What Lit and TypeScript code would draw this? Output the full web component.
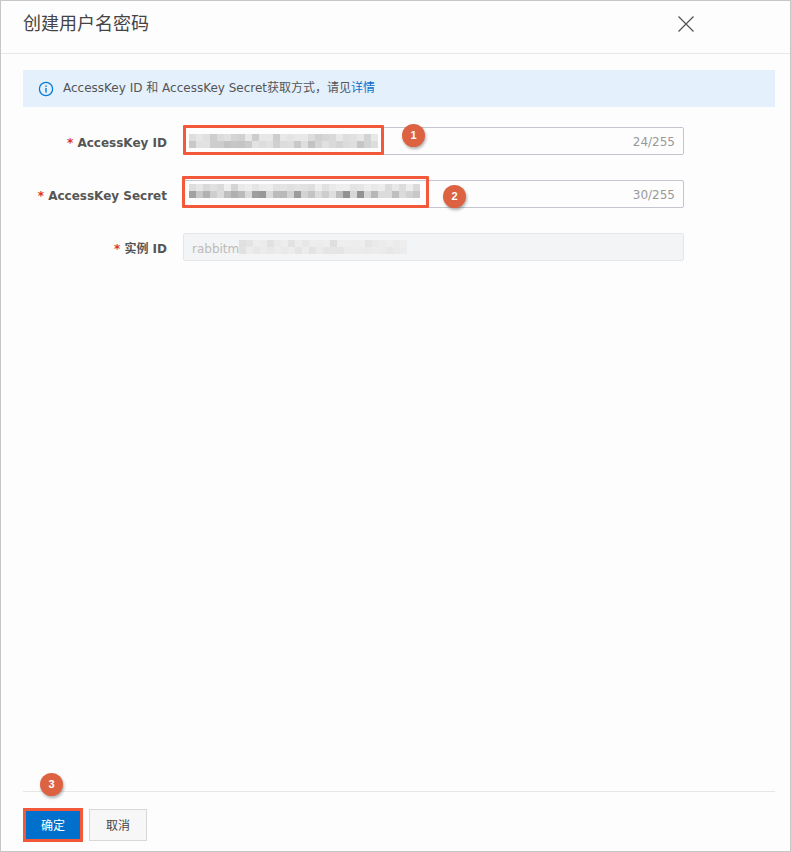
import { LitElement, html, css } from "lit";
import { customElement } from "lit/decorators.js";

function mosaic(cols: number, seed: number, bands: [number, number][], lift = false) {
  let s = seed;
  const next = () => {
    s = (s * 1103515245 + 12345) & 0x7fffffff;
    return s / 0x7fffffff;
  };
  const cells = [];
  for (const [lo, hi] of bands) {
    for (let i = 0; i < cols; i++) {
      const r = next();
      const v = Math.round(hi - (hi - lo) * r * r);
      cells.push(html`<i style="background:rgb(${v},${v},${v})"></i>`);
    }
  }
  return html`<span class="mosaic ${lift ? "lift" : ""}" style="grid-template-columns:repeat(${cols},7px)">${cells}</span>`;
}

@customElement("app-root")
export class AppRoot extends LitElement {
  static styles = css`
    :host {
      display: block;
      width: 791px;
      height: 852px;
      font-family: "DejaVu Sans", "Noto Sans CJK SC", sans-serif;
    }
    .dialog {
      box-sizing: border-box;
      width: 791px;
      height: 852px;
      border: 1px solid #c6c6c6;
      background: #fdfdfd;
      display: flex;
      flex-direction: column;
      position: relative;
    }
    .header {
      flex: none;
      height: 46px;
      border-bottom: 1px solid #e8e8e8;
      display: flex;
      align-items: center;
      justify-content: space-between;
      padding: 0 95px 6px 22px;
    }
    .title {
      padding-bottom: 4px;
      font: 18px/24px "Noto Sans CJK SC", sans-serif;
      color: #444;
    }
    .close {
      display: block;
      width: 18px;
      height: 18px;
    }
    .alert {
      margin: 16px 15px 0 22px;
      height: 37px;
      background: #e4f0fc;
      display: flex;
      align-items: center;
      gap: 9px;
      padding: 0 0 2px 15px;
      box-sizing: border-box;
      font: 12px/16px "DejaVu Sans", "Noto Sans CJK SC", sans-serif;
      color: #555;
    }
    .alert svg {
      flex: none;
      margin-top: 2px;
    }
    .alert a {
      color: #0a6fc9;
      text-decoration: none;
    }
    .form {
      margin-top: 20px;
      display: flex;
      flex-direction: column;
      gap: 25px;
    }
    .row {
      display: flex;
      align-items: center;
      height: 28px;
      position: relative;
    }
    .label {
      box-sizing: border-box;
      width: 166px;
      flex: none;
      padding-top: 4px;
      text-align: right;
      font: bold 12px/16px "DejaVu Sans", "Noto Sans CJK SC", sans-serif;
      color: #555;
      white-space: nowrap;
    }
    .star {
      color: #d9342b;
    }
    .input {
      margin-left: 16px;
      width: 501px;
      height: 28px;
      box-sizing: border-box;
      border: 1px solid #c4c6cf;
      border-radius: 2px;
      background: #fdfdfd;
      display: flex;
      align-items: center;
      justify-content: space-between;
      padding: 0 8px 0 5px;
    }
    .input.disabled {
      background: #f3f4f5;
      border-color: #e5e6e8;
      justify-content: flex-start;
      padding-left: 8px;
    }
    .count {
      padding-top: 2px;
      font: 12px/16px "DejaVu Sans", sans-serif;
      color: #999;
    }
    .ghost {
      padding-top: 3px;
      font: 12px/16px "DejaVu Sans", sans-serif;
      color: #bbb;
    }
    .mosaic {
      display: inline-grid;
      grid-auto-rows: 7px;
      filter: blur(0.6px);
    }
    .mosaic.lift {
      margin-bottom: 6px;
    }
    .mosaic i {
      display: block;
    }
    .mark {
      position: absolute;
      box-sizing: border-box;
      border: 3px solid #f4583a;
      border-radius: 1px;
      pointer-events: none;
    }
    .mark.one {
      left: 182px;
      top: -2px;
      width: 201px;
      height: 30px;
    }
    .mark.two {
      left: 181px;
      top: -4px;
      width: 247px;
      height: 32px;
    }
    .badge {
      position: absolute;
      width: 23px;
      height: 23px;
      border-radius: 50%;
      background: #dc6242;
      color: #fff;
      font: bold 11px/23px "Liberation Sans", sans-serif;
      text-align: center;
      box-shadow: 1px 2px 3px rgba(0, 0, 0, 0.3);
    }
    .badge.b1 {
      left: 401px;
      top: -3px;
    }
    .badge.b2 {
      left: 442px;
      top: 5px;
    }
    .badge.b3 {
      left: 39px;
      top: -18px;
    }
    .spacer {
      flex: 1;
    }
    .footwrap {
      position: relative;
    }
    .footer {
      margin: 0 15px 9px 22px;
      border-top: 1px solid #e6e6e6;
      padding-top: 16px;
      display: flex;
      align-items: center;
      gap: 6px;
    }
    .btn {
      box-sizing: border-box;
      height: 32px;
      font: 12px/30px "Noto Sans CJK SC", sans-serif;
      text-align: center;
    }
    .primary {
      width: 60px;
      height: 34px;
      line-height: 27px;
      border: 3px solid #f4583a;
      background: #0070cc;
      color: #fff;
    }
    .secondary {
      width: 58px;
      border: 1px solid #d8d8d8;
      background: #f7f7f7;
      color: #444;
    }
  `;

  render() {
    return html`
      <div class="dialog">
        <div class="header">
          <div class="title">创建用户名密码</div>
          <svg class="close" viewBox="0 0 18 18" fill="none" stroke="#555" stroke-width="1.3">
            <path d="M1.5 1.5 16.5 16.5M16.5 1.5 1.5 16.5"></path>
          </svg>
        </div>
        <div class="alert">
          <svg width="16" height="16" viewBox="0 0 16 16" fill="none">
            <circle cx="8" cy="8" r="6.6" stroke="#0a7bd8" stroke-width="1.3"></circle>
            <rect x="7.3" y="7" width="1.4" height="4.6" fill="#0a7bd8"></rect>
            <rect x="7.3" y="4.4" width="1.4" height="1.5" fill="#0a7bd8"></rect>
          </svg>
          <span>AccessKey ID 和 AccessKey Secret获取方式，请见<a href="#">详情</a></span>
        </div>
        <div class="form">
          <div class="row">
            <div class="label"><span class="star">*</span> AccessKey ID</div>
            <div class="input">${mosaic(27, 7, [[205, 232], [185, 226]])}<span class="count">24/255</span></div>
            <div class="mark one"></div>
            <div class="badge b1">1</div>
          </div>
          <div class="row">
            <div class="label"><span class="star">*</span> AccessKey Secret</div>
            <div class="input">${mosaic(33, 19, [[210, 238], [140, 222]], true)}<span class="count">30/255</span></div>
            <div class="mark two"></div>
            <div class="badge b2">2</div>
          </div>
          <div class="row">
            <div class="label"><span class="star">*</span> 实例 ID</div>
            <div class="input disabled"><span class="ghost">rabbitm</span>${mosaic(24, 31, [[222, 238], [220, 236]])}</div>
          </div>
        </div>
        <div class="spacer"></div>
        <div class="footwrap">
          <div class="footer">
            <div class="btn primary">确定</div>
            <div class="btn secondary">取消</div>
          </div>
          <div class="badge b3">3</div>
        </div>
      </div>
    `;
  }
}
